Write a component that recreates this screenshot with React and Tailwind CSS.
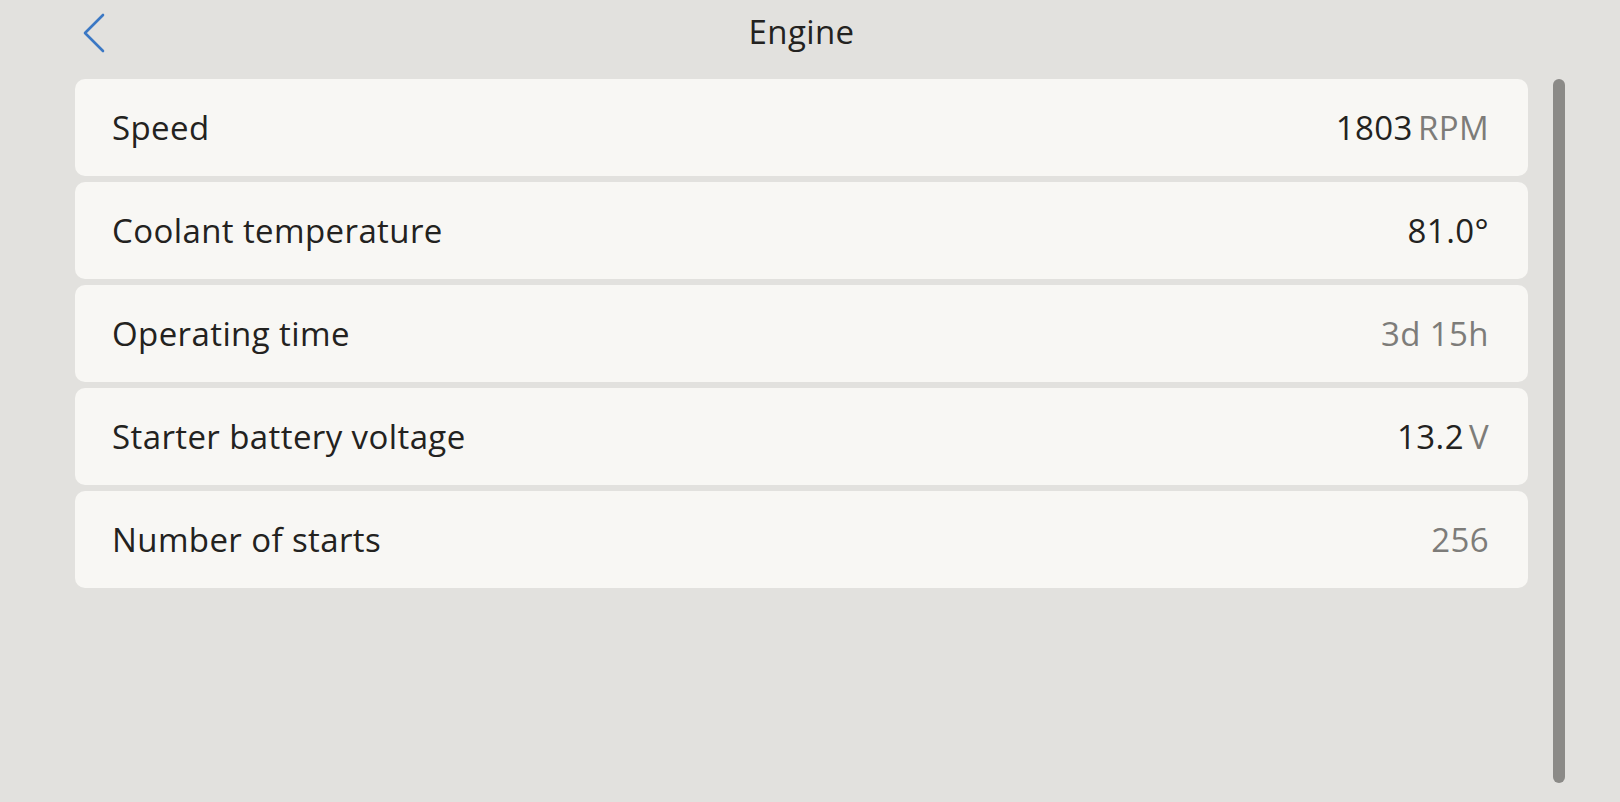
const rows = [
    { label: 'Speed', value: '1803', unit: 'RPM' },
    { label: 'Coolant temperature', value: '81.0°', unit: '' },
    { label: 'Operating time', value: '', unit: '3d 15h' },
    { label: 'Starter battery voltage', value: '13.2', unit: 'V' },
    { label: 'Number of starts', value: '', unit: '256' },
];

export default function App() {
    return (
        <div
            className="w-[1620px] h-[802px] bg-[#e2e1de] text-[#232220] overflow-hidden flex flex-col tracking-[0.4px]"
            style={{ fontFamily: '"Open Sans", Lato, sans-serif' }}
        >
            {/* HEADER */}
            <div className="h-[79px] ml-[75px] mr-[92px] grid grid-cols-[1fr_auto_1fr] items-center">
                <div className="pl-[7px] -mt-[14px]">
                    <svg width="24" height="40" viewBox="0 0 24 40" fill="none">
                        <polyline
                            points="21,2 3,20 21,38"
                            stroke="#3b78c4"
                            strokeWidth="2.6"
                            strokeLinecap="round"
                            strokeLinejoin="round"
                        />
                    </svg>
                </div>
                <h1 className="text-[33px] leading-none -mt-[16px]">Engine</h1>
                <div />
            </div>

            {/* LIST + SCROLLBAR */}
            <div className="flex flex-1">
                <div className="flex-1 ml-[75px] flex flex-col gap-[6px]">
                    {rows.map((row) => (
                        <div
                            key={row.label}
                            className="h-[97px] bg-[#f8f7f4] rounded-[10px] flex items-center justify-between pl-[37px] pr-[39px]"
                        >
                            <span className="text-[33px]">{row.label}</span>
                            <span className="text-[33px] flex gap-[5px]">
                                {row.value && <span>{row.value}</span>}
                                {row.unit && <span className="text-[#7d7c79]">{row.unit}</span>}
                            </span>
                        </div>
                    ))}
                </div>
                <div className="ml-[25px] mr-[55px] mb-[19px] w-[12px] bg-[#8b8a87] rounded-full" />
            </div>
        </div>
    );
}
